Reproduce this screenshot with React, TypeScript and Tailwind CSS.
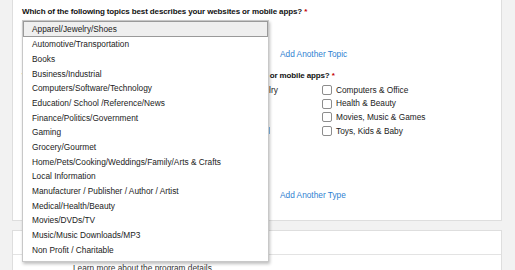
import React from "react";

const topics = [
  "Apparel/Jewelry/Shoes",
  "Automotive/Transportation",
  "Books",
  "Business/Industrial",
  "Computers/Software/Technology",
  "Education/ School /Reference/News",
  "Finance/Politics/Government",
  "Gaming",
  "Grocery/Gourmet",
  "Home/Pets/Cooking/Weddings/Family/Arts & Crafts",
  "Local Information",
  "Manufacturer / Publisher / Author / Artist",
  "Medical/Health/Beauty",
  "Movies/DVDs/TV",
  "Music/Music Downloads/MP3",
  "Non Profit / Charitable",
];

const checks = [
  ["Baby Products", "Clothing, Shoes & Jewelry", "Computers & Office"],
  ["Books", "Electronics", "Health & Beauty"],
  ["Automotive", "Home & Garden", "Movies, Music & Games"],
  ["Sports", "Office Supplies & Digital", "Toys, Kids & Baby"],
];

function Box({ label, w }: { label: string; w: string }) {
  return (
    <div className={"flex items-center h-[13.7px] whitespace-nowrap " + w}>
      <span className="w-[10px] h-[10px] border border-[#8d8d8d] rounded-[2px] bg-white shrink-0" />
      <span className="ml-[4px] text-[8.3px] text-[#222]">{label}</span>
    </div>
  );
}

const widths = ["w-[145px]", "w-[155px]", "w-[150px]"];

export default function App() {
  return (
    <div
      className="relative w-[515px] h-[270px] overflow-hidden bg-[#f2f2f2]"
      style={{ fontFamily: '"Liberation Sans", Arial, sans-serif' }}
    >
      <div className="ml-[12px] mt-[-10px] w-[490px] h-[231px] bg-white border border-[#dedede] pl-[9px]">
        <div className="pt-[15px] text-[8px] tracking-[-0.12px] font-bold text-[#111] leading-[12px] whitespace-nowrap">
          Which of the following topics best describes your websites or mobile apps?{" "}
          <span className="text-[#c40000]">*</span>
        </div>
        <div className="flex mt-[4px]">
          <div className="w-[246px] h-[16px] border border-[#aaa] bg-[#f0f0f0]" />
          <div className="ml-[12px] pt-[27px] text-[8.3px] text-[#2f7fd1] leading-[10px] whitespace-nowrap">
            Add Another Topic
          </div>
        </div>
        <div className="mt-[11px] text-[8px] tracking-[-0.12px] font-bold text-[#111] leading-[12px] whitespace-nowrap">
          Which types of products do you want to link to from your websites or mobile apps?{" "}
          <span className="text-[#c40000]">*</span>
        </div>
        <div className="mt-[1px] flex flex-col">
          {checks.map((row, i) => (
            <div key={i} className="flex">
              {row.map((c, j) => (
                <Box key={c} label={c} w={widths[j]} />
              ))}
            </div>
          ))}
        </div>
        <div className="ml-[258px] mt-[52px] text-[8.3px] text-[#2f7fd1] leading-[10px] whitespace-nowrap">
          Add Another Type
        </div>
      </div>
      <div className="ml-[12px] mt-[9px] w-[490px] h-[60px] bg-white border border-[#dedede]">
        <div className="h-[24px] border-b border-[#e3e3e3]" />
        <div className="pl-[60px] pt-[7px] text-[8.3px] text-[#333] whitespace-nowrap">
          Learn more about the program details
        </div>
      </div>

      <div className="absolute left-[22px] top-[20px] w-[247px] bg-white border border-[#c8c8c8] shadow-[1px_2px_3px_rgba(0,0,0,0.25)] pb-[4px]">
        {topics.map((t, i) => (
          <div
            key={t}
            className={
              "flex items-center text-[8.3px] text-[#222] whitespace-nowrap " +
              (i === 0
                ? "h-[16px] bg-[#efefef] border border-[#9a9a9a] pl-[8px]"
                : "h-[14.7px] pl-[9px]")
            }
          >
            {t}
          </div>
        ))}
      </div>
    </div>
  );
}
